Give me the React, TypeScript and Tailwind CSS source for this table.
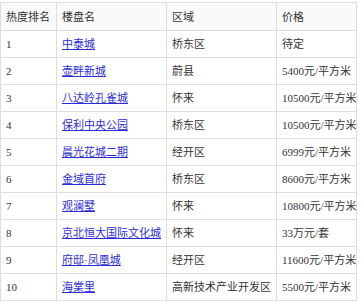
import React from "react";

type Row = { rank: string; name: string; area: string; price: string };

const rows: Row[] = [
  { rank: "1", name: "中泰城", area: "桥东区", price: "待定" },
  { rank: "2", name: "壶畔新城", area: "蔚县", price: "5400元/平方米" },
  { rank: "3", name: "八达岭孔雀城", area: "怀来", price: "10500元/平方米" },
  { rank: "4", name: "保利中央公园", area: "桥东区", price: "10500元/平方米" },
  { rank: "5", name: "晨光花城二期", area: "经开区", price: "6999元/平方米" },
  { rank: "6", name: "金域首府", area: "桥东区", price: "8600元/平方米" },
  { rank: "7", name: "观澜墅", area: "怀来", price: "10800元/平方米" },
  { rank: "8", name: "京北恒大国际文化城", area: "怀来", price: "33万元/套" },
  { rank: "9", name: "府邸·凤凰城", area: "经开区", price: "11600元/平方米" },
  { rank: "10", name: "海棠里", area: "高新技术产业开发区", price: "5500元/平方米" },
];

const cell =
  "border border-[#dddddd] pl-[5px] pr-[2px] h-[27px] leading-[14px] align-middle whitespace-nowrap overflow-hidden";

export default function App() {
  return (
    <div className="w-[362px] h-[308px] bg-white pt-[2px] text-[11px] text-[#333333] font-[family-name:'Liberation_Serif','Noto_Sans_CJK_SC',serif]">
      <table className="table-fixed border-collapse w-[356px]">
        <colgroup>
          <col className="w-[56px]" />
          <col className="w-[110px]" />
          <col className="w-[110px]" />
          <col className="w-[80px]" />
        </colgroup>
        <thead>
          <tr className="bg-[#fafafa]">
            <th className={`${cell} h-[28px] text-left font-normal`}>热度排名</th>
            <th className={`${cell} h-[28px] text-left font-normal`}>楼盘名</th>
            <th className={`${cell} h-[28px] text-left font-normal`}>区域</th>
            <th className={`${cell} h-[28px] text-left font-normal`}>价格</th>
          </tr>
        </thead>
        <tbody>
          {rows.map((r) => (
            <tr key={r.rank}>
              <td className={cell}>{r.rank}</td>
              <td className={cell}>
                <a href="#" className="text-[#2d2dd8] underline">
                  {r.name}
                </a>
              </td>
              <td className={cell}>{r.area}</td>
              <td className={cell}>{r.price}</td>
            </tr>
          ))}
        </tbody>
      </table>
    </div>
  );
}
